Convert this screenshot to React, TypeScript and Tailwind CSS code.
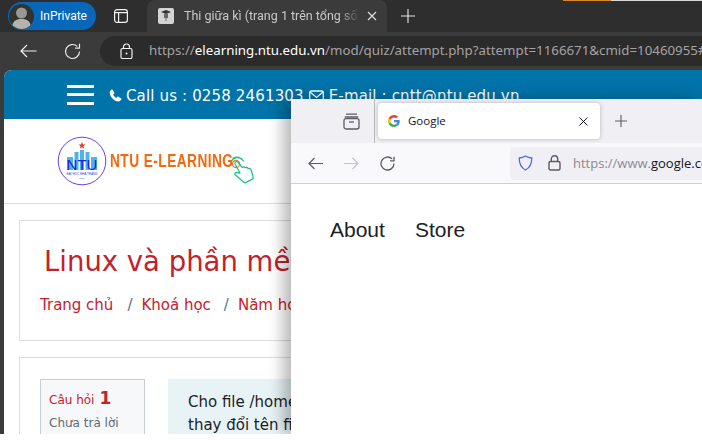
import React from "react";

const sans = "font-['Roboto','Open_Sans',sans-serif]";

function EdgeChrome() {
  return (
    <div className="flex flex-col font-['Roboto',sans-serif]">
      <div className="relative flex h-[32px] items-center bg-[#2e2e2e]">
        <div className="absolute left-[563px] top-0 h-px w-[48px] bg-[#d8861c]" />
        <div className="absolute left-[611px] top-0 h-px w-[91px] bg-[#d9d9d9]" />
        <div className="ml-[8px] flex h-[28px] w-[88px] shrink-0 items-center rounded-full bg-[#0767b8]">
          <div className="ml-[1px] flex h-[25px] w-[25px] shrink-0 items-center justify-center overflow-hidden rounded-full bg-[#33322f]">
            <svg className="shrink-0" width="25" height="25" viewBox="0 0 25 25">
              <circle cx="12.5" cy="9" r="5.5" fill="#9a9894" />
              <path d="M3 25c0-8 4-10 9.5-10S22 17 22 25z" fill="#b5b3ae" />
            </svg>
          </div>
          <span className="ml-[6px] whitespace-nowrap text-[12px] text-white">InPrivate</span>
        </div>
        <svg className="ml-[17px] shrink-0" width="16" height="16" viewBox="0 0 16 16" fill="none" stroke="#f2f2f2" strokeWidth="1.2">
          <rect x="1.6" y="1.6" width="12.8" height="12.8" rx="2.4" />
          <path d="M1.6 4.6h12.8M5.6 4.6v9.8" />
        </svg>
        <div className="ml-[18px] flex h-[32px] w-[240px] shrink-0 items-center self-end rounded-t-[8px] bg-[#3b3b3b]">
          <div className="ml-[11px] flex h-[16px] w-[16px] shrink-0 items-center justify-center rounded-[2px] bg-[#d4d4d4]">
            <svg className="shrink-0" width="12" height="14" viewBox="0 0 12 14">
              <path d="M1 3l5-2 5 2-5 2z" fill="#333" />
              <path d="M4 5h4v4H6.5v3h-1V9H4z" fill="#666" />
            </svg>
          </div>
          <span className="ml-[10px] w-[176px] overflow-hidden whitespace-nowrap text-[12.500px] text-[#c8c8c8] [mask-image:linear-gradient(to_right,black_88%,transparent)]">Thi giữa kì (trang 1 trên tổng số 3)</span>
          <svg className="ml-[7px] shrink-0" width="10" height="10" viewBox="0 0 10 10" stroke="#e0e0e0" strokeWidth="1.1">
            <path d="M1 1l8 8M9 1l-8 8" />
          </svg>
        </div>
        <svg className="ml-[14px] shrink-0" width="14" height="14" viewBox="0 0 14 14" stroke="#e8e8e8" strokeWidth="1.1">
          <path d="M7 0v14M0 7h14" />
        </svg>
      </div>
      <div className="flex h-[38px] items-center bg-[#3b3b3b]">
        <svg className="ml-[20px] shrink-0" width="17" height="14" viewBox="0 0 17 14" fill="none" stroke="#f0f0f0" strokeWidth="1.2">
          <path d="M16.5 7H1M7 1L1 7l6 6" />
        </svg>
        <svg className="ml-[27px] shrink-0" width="17" height="17" viewBox="0 0 17 17" fill="none" stroke="#e8e8e8" strokeWidth="1.2">
          <path d="M15.5 8.5a7 7 0 1 1-2.2-5.1" />
          <path d="M15.5 0.8v4.4h-4.4" />
        </svg>
        <div className="ml-[19px] flex h-[30px] min-w-0 flex-1 items-center overflow-hidden rounded-l-full bg-[#2b2b2b]">
          <svg className="ml-[20px] shrink-0" width="13" height="16" viewBox="0 0 13 16" fill="none" stroke="#f0f0f0" strokeWidth="1.2">
            <rect x="1" y="5.5" width="11" height="10" rx="1.5" />
            <path d="M3.5 5.5V4a3 3 0 0 1 6 0v1.5" />
            <circle cx="6.5" cy="10.5" r="1" fill="#f0f0f0" stroke="none" />
          </svg>
          <span className="ml-[16px] whitespace-nowrap font-['Noto_Sans',sans-serif] text-[13.300px] text-[#a3a3a3]">
            https://<span className="text-white">elearning.ntu.edu.vn</span>/mod/quiz/attempt.php?attempt=1166671&amp;cmid=10460955#
          </span>
        </div>
      </div>
    </div>
  );
}

function NtuLogo() {
  return (
    <svg className="shrink-0" width="50" height="50" viewBox="0 0 50 50">
      <circle cx="25" cy="25" r="23.8" fill="white" stroke="#5b2be0" strokeWidth="0.9" />
      <path d="M25 6l1 2.6h2.4l-2 1.6.8 2.6L25 11.2l-2.2 1.6.8-2.6-2-1.6H24z" fill="#e0362c" />
      <path d="M10 21h6v13h-6zM17.500 16h4v18h-4zM23 14h4v20h-4zM28.500 16h4v18h-4zM34 21h6v13h-6z" fill="#4fb3e3" />
      <text x="25" y="34" textAnchor="middle" fontSize="15" fontFamily="Liberation Sans" fill="#2020e0">NTU</text>
      <text x="25" y="39" textAnchor="middle" fontSize="3" fontFamily="Liberation Sans" fill="#3a3ac0">ĐẠI HỌC NHA TRANG</text>
      <text x="25" y="43" textAnchor="middle" fontSize="2.2" fontFamily="Liberation Sans" fill="#3a3ac0">1959</text>
    </svg>
  );
}

function Hand() {
  return (
    <svg className="shrink-0" width="28" height="32" viewBox="0 0 28 32" fill="none" stroke="#1fc48d" strokeWidth="1.3" strokeLinejoin="round" strokeLinecap="round">
      <circle cx="8" cy="10" r="3.5" stroke="#f07a2a" />
      <path d="M3 9a6.500 6.500 0 0 1 11-3.500M5 4a8 8 0 0 1 10.500 3" />
      <path d="M7 10l5 9-3-.5c-2-.3-3 1.500-1.500 2.500l8 7c1 .8 2 .8 3 .2l5-2.500c1.500-.8 2-2 1.500-3.500l-2-6.500c-.5-1.500-2-1.500-3-1.200-.5-1.300-2-1.500-3-.8-.5-1-2-1.200-3-.3L10 8c-.8-1.200-3.500-.2-3 2z" />
    </svg>
  );
}

function WebPage() {
  return (
    <div className="flex h-[364px] bg-[#3b3b3b] pl-[4px]">
      <div className="flex min-w-0 flex-1 flex-col overflow-hidden rounded-tl-[8px] bg-white font-['DejaVu_Sans',sans-serif]">
        <div className="flex h-[49px] shrink-0 items-center bg-[#0073a8] text-white">
          <div className="ml-[63px] flex h-[20px] w-[27px] shrink-0 flex-col justify-between">
            <div className="h-[3px] bg-white" />
            <div className="h-[3px] bg-white" />
            <div className="h-[3px] bg-white" />
          </div>
          <svg className="ml-[15px] mt-[2px] shrink-0" width="13" height="13" viewBox="0 0 24 24" fill="white">
            <path d="M6.600 1.500l3.400 5.500c.3.500.2 1.100-.2 1.500L7.600 10.700c1.300 2.600 3.200 4.500 5.700 5.700l2.200-2.200c.4-.4 1-.5 1.500-.2l5.500 3.400c.6.400.8 1.100.5 1.700-1.100 2.100-2.700 3.900-5.300 3.900C9.700 22.700 1.300 14.300 1.300 6.300c0-2.600 1.800-4.200 3.900-5.300.5-.3 1.100-.1 1.400.5z" />
          </svg>
          <span className="ml-[4px] mt-[3px] whitespace-nowrap text-[15px] font-medium tracking-[0.15px]">Call us : 0258 2461303</span>
          <svg className="ml-[5px] mt-[3px] shrink-0" width="15" height="13" viewBox="0 0 15 13" fill="none" stroke="white" strokeWidth="1.300">
            <rect x="0.700" y="1" width="13.600" height="11" rx="1.500" />
            <path d="M1 2l6.500 5.500L14 2" />
          </svg>
          <span className="ml-[5px] mt-[3px] whitespace-nowrap text-[15px] tracking-[0.15px]">E-mail : cntt@ntu.edu.vn</span>
        </div>
        <div className="flex h-[85px] shrink-0 items-center border-b border-[#dddddd]">
          <div className="ml-[53px] flex items-center">
            <NtuLogo />
            <div className="ml-[3px] w-[123px] shrink-0">
              <span className="block origin-left scale-x-[0.76] whitespace-nowrap font-['Liberation_Sans',sans-serif] text-[18px] font-bold leading-[20px] tracking-[0.6px] text-[#f26a10]">NTU E-LEARNING</span>
            </div>
            <div className="-ml-[5px] mt-[18px]"><Hand /></div>
          </div>
        </div>
        <div className="mx-[15px] mt-[16px] h-[121px] shrink-0 border border-[#dddddd] pl-[20px] pt-[18px]">
          <div className="ml-[4px] whitespace-nowrap text-[27.500px] leading-[44px] text-[#c3212b]">Linux và phần mềm mã nguồn mở</div>
          <div className="mt-[10px] flex whitespace-nowrap text-[15px] leading-[24px] text-[#c3212b]">
            <span>Trang chủ</span>
            <span className="ml-[14px] text-[#5a7184]">/</span>
            <span className="ml-[9px]">Khoá học</span>
            <span className="ml-[13px] text-[#5a7184]">/</span>
            <span className="ml-[9px]">Năm học 2023</span>
          </div>
        </div>
        <div className="mx-[15px] mt-[16px] flex flex-1 gap-[23px] border-x border-t border-[#dddddd] pl-[20px] pt-[21px]">
          <div className="h-[60px] w-[105px] shrink-0 border border-[#c8ced6] bg-[#f6f8fa] pl-[8px] pt-[6px]">
            <div className="flex items-baseline text-[12px] leading-[24px] text-[#c3212b]">
              Câu hỏi<span className="ml-[5px] text-[17px] font-bold">1</span>
            </div>
            <div className="mt-[2px] text-[12px] leading-[18px] text-[#5f6a75]">Chưa trả lời</div>
          </div>
          <div className="h-[60px] min-w-0 flex-1 overflow-hidden bg-[#e7f3f5] pl-[20px] pt-[12px] text-[15px] leading-[23px] whitespace-nowrap text-[#1d2125]">
            <div>Cho file /home/user/data.txt</div>
            <div>thay đổi tên file</div>
          </div>
        </div>
      </div>
    </div>
  );
}

function GoogleG() {
  return (
    <svg className="shrink-0" width="12" height="12" viewBox="0 0 48 48">
      <path fill="#EA4335" d="M24 9.500c3.500 0 6.700 1.200 9.200 3.600l6.900-6.900C35.900 2.400 30.500 0 24 0 14.600 0 6.500 5.400 2.600 13.200l8 6.200C12.400 13.700 17.700 9.500 24 9.500z" />
      <path fill="#4285F4" d="M46.900 24.500c0-1.600-.1-3.100-.4-4.500H24v9h12.900c-.6 3-2.200 5.500-4.800 7.200l7.700 6c4.500-4.200 7.100-10.300 7.100-17.700z" />
      <path fill="#FBBC05" d="M10.500 28.600a14.500 14.500 0 0 1 0-9.200l-8-6.200a24 24 0 0 0 0 21.600z" />
      <path fill="#34A853" d="M24 48c6.500 0 11.900-2.100 15.900-5.800l-7.700-6c-2.200 1.500-4.900 2.300-8.200 2.300-6.300 0-11.600-4.200-13.500-9.900l-8 6.200C6.500 42.600 14.600 48 24 48z" />
    </svg>
  );
}

function FirefoxWindow() {
  return (
    <div className="absolute left-[291px] top-[99px] h-[335px] w-[411px] bg-white font-['Open_Sans',sans-serif] shadow-[-8px_0_14px_rgba(0,0,0,0.28)]">
      <div className="flex h-[44px] items-center bg-[#f0f0f4]">
        <svg className="ml-[52px] shrink-0" width="17" height="17" viewBox="0 0 17 17" fill="none" stroke="#5b5b66" strokeWidth="1.300">
          <path d="M3 1.200h11M1.800 4h13.400" />
          <rect x="1" y="5.600" width="15" height="10.400" rx="2" />
          <path d="M6 9h5" />
        </svg>
        <div className="ml-[14px] h-[44px] w-px shrink-0 bg-[#b9b9c0]" />
        <div className="ml-[3px] flex h-[36px] w-[222px] shrink-0 items-center rounded-[4px] bg-white shadow-[0_0_4px_rgba(0,0,0,0.25)]">
          <div className="ml-[10px] flex"><GoogleG /></div>
          <span className="ml-[8px] text-[11.500px] text-[#15141a]">Google</span>
          <svg className="ml-auto mr-[12px] shrink-0" width="9" height="9" viewBox="0 0 9 9" stroke="#15141a" strokeWidth="1">
            <path d="M.5.500l8 8M8.500.500l-8 8" />
          </svg>
        </div>
        <svg className="ml-[15px] shrink-0" width="12" height="12" viewBox="0 0 12 12" stroke="#5b5b66" strokeWidth="1.100">
          <path d="M6 0v12M0 6h12" />
        </svg>
      </div>
      <div className="flex h-[41px] items-center border-b border-[#cfcfd8] bg-[#f9f9fb]">
        <svg className="ml-[17px] shrink-0" width="15" height="13" viewBox="0 0 15 13" fill="none" stroke="#5b5b66" strokeWidth="1.200">
          <path d="M15 6.500H1M6.500 1L1 6.500 6.500 12" />
        </svg>
        <svg className="ml-[21px] shrink-0" width="15" height="13" viewBox="0 0 15 13" fill="none" stroke="#c4c4ca" strokeWidth="1.200">
          <path d="M0 6.500h14M8.500 1L14 6.500 8.500 12" />
        </svg>
        <svg className="ml-[21px] shrink-0" width="15" height="15" viewBox="0 0 15 15" fill="none" stroke="#5b5b66" strokeWidth="1.300">
          <path d="M14 7.500a6.500 6.500 0 1 1-2-4.700" />
          <path d="M14 .8v4h-4" />
        </svg>
        <div className="ml-[115px] flex h-[33px] min-w-0 flex-1 items-center overflow-hidden rounded-l-[4px] bg-[#f0f0f4]">
          <svg className="ml-[8px] shrink-0" width="15" height="16" viewBox="0 0 15 16" fill="none" stroke="#5a62ee" strokeWidth="1.300">
            <path d="M7.500 1c2 1.200 4 1.800 6.300 2 0 5.500-1.500 9.500-6.300 12C2.700 12.500 1.200 8.500 1.200 3c2.300-.2 4.300-.8 6.300-2z" />
          </svg>
          <svg className="ml-[15px] shrink-0" width="13" height="16" viewBox="0 0 13 16" fill="none" stroke="#5b5b66" strokeWidth="1.400">
            <rect x="1" y="6.500" width="11" height="8.500" rx="1.500" />
            <path d="M3.300 6.500V4a3.200 3.200 0 0 1 6.400 0v2.500" />
          </svg>
          <span className="ml-[12px] mt-[2px] whitespace-nowrap text-[13px] text-[#8a8a92]">
            https://www.<span className="text-[#15141a]">google.com</span>
          </span>
        </div>
      </div>
      <div className="ml-[39px] mt-[34px] flex gap-[30px] font-['Liberation_Sans',sans-serif] text-[21px] leading-[24px] text-[#202124]">
        <span>About</span>
        <span>Store</span>
      </div>
    </div>
  );
}

export default function App() {
  return (
    <div className={`relative h-[434px] w-[702px] overflow-hidden ${sans}`}>
      <EdgeChrome />
      <WebPage />
      <FirefoxWindow />
    </div>
  );
}
